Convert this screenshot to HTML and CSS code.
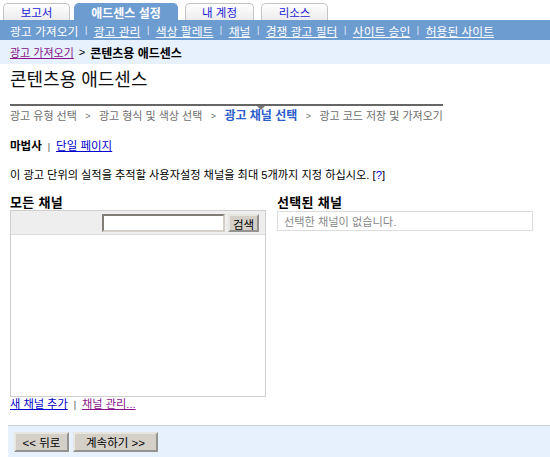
FILE: index.html
```html
<!DOCTYPE html>
<html lang="ko">
<head>
<meta charset="utf-8">
<title>콘텐츠용 애드센스</title>
<link rel="stylesheet" href="styles.css">
</head>
<body>
<div class="tabs">
  <a class="tab t1" href="#">보고서</a>
  <a class="tab t2 active" href="#">애드센스 설정</a>
  <a class="tab t3" href="#">내 계정</a>
  <a class="tab t4" href="#">리소스</a>
</div>
<div class="nav">
  <span class="cur">광고 가져오기</span><span class="sep">|</span>
  <a href="#">광고 관리</a><span class="sep">|</span>
  <a href="#">색상 팔레트</a><span class="sep">|</span>
  <a href="#">채널</a><span class="sep">|</span>
  <a href="#">경쟁 광고 필터</a><span class="sep">|</span>
  <a href="#">사이트 승인</a><span class="sep">|</span>
  <a href="#">허용된 사이트</a>
</div>
<div class="crumb">
  <a class="visited" href="#">광고 가져오기</a><span class="gt">&gt;</span><b>콘텐츠용 애드센스</b>
</div>
<div class="content">
  <h1 class="title">콘텐츠용 애드센스</h1>
  <div class="steps">
    <span class="step">광고 유형 선택</span>
    <span class="arrow">&gt;</span>
    <span class="step">광고 형식 및 색상 선택</span>
    <span class="arrow">&gt;</span>
    <span class="step on">광고 채널 선택</span>
    <span class="arrow">&gt;</span>
    <span class="step">광고 코드 저장 및 가져오기</span>
  </div>
  <div class="mode"><b>마법사</b><span class="bar">|</span><a href="#">단일 페이지</a></div>
  <p class="desc">이 광고 단위의 실적을 추적할 사용자설정 채널을 최대 5개까지 지정 하십시오. [<a class="help" href="#">?</a>]</p>
  <div class="cols">
    <div class="col">
      <div class="colhead">모든 채널</div>
      <div class="allbox">
        <div class="toolbar">
          <input class="search" type="text">
          <button class="wbtn sbtn" type="button">검색</button>
        </div>
      </div>
      <div class="links"><a href="#">새 채널 추가</a><span class="bar">|</span><a class="visited" href="#">채널 관리...</a></div>
    </div>
    <div class="col">
      <div class="colhead">선택된 채널</div>
      <div class="selbox">선택한 채널이 없습니다.</div>
    </div>
  </div>
</div>
<div class="footer">
  <button class="wbtn back" type="button">&lt;&lt; 뒤로</button>
  <button class="wbtn next" type="button">계속하기 &gt;&gt;</button>
</div>
</body>
</html>
```
FILE: styles.css
```css
* { box-sizing: border-box; }
body {
  margin: 0;
  font-family: "Liberation Sans", "Noto Sans CJK KR", sans-serif;
  font-size: 11px;
  color: #000;
  background: #fff;
}
a { color: #0000cc; }
a.visited { color: #881188; }
a.help { text-decoration: none; }

.tabs {
  display: flex;
  align-items: flex-end;
  height: 20px;
  padding: 3px 0 0 3px;
}
.tab {
  display: flex;
  align-items: center;
  justify-content: center;
  height: 17px;
  border: 1px solid #c4c4c4;
  border-bottom: none;
  border-radius: 5px 5px 0 0;
  background: linear-gradient(#ffffff, #ececec);
  color: #1a1ad8;
  text-decoration: none;
  font-size: 11.5px;
}
.t1 { width: 67px; }
.t2 { width: 104px; margin-left: 4px; }
.t3 { width: 69px; margin-left: 7px; }
.t4 { width: 67px; margin-left: 7px; }
.tab.active {
  background: #6d9cd1;
  border-color: #6d9cd1;
  color: #fff;
  font-size: 12px;
  font-weight: bold;
}

.nav {
  display: flex;
  align-items: center;
  height: 20px;
  padding-left: 10px;
  background: #6d9cd1;
  color: #fff;
  font-size: 11.8px;
}
.nav a { color: #fff; }
.nav .sep { margin: 0 6.5px; font-size: 9px; color: #e8eef8; }

.crumb {
  display: flex;
  align-items: center;
  height: 24px;
  padding-left: 10px;
  background: #e6f1fd;
  font-size: 11px;
}
.crumb .gt { margin: 0 5px 0 5px; }
.crumb b { font-size: 12px; }

.content { padding: 0 10px; }
.title {
  margin: 5px 0 0;
  font-size: 18px;
  font-weight: normal;
  line-height: 22px;
  color: #111;
}
.steps {
  display: flex;
  justify-content: space-between;
  width: 433px;
  margin-top: 13px;
  border-top: 2px solid #666;
  padding-top: 3px;
  color: #6e6e6e;
  font-size: 11px;
  line-height: 14px;
}
.steps .arrow { font-size: 9px; }
.step.on {
  position: relative;
  color: #2a5ccc;
  font-weight: bold;
  font-size: 12px;
}
.step.on::after {
  content: "";
  position: absolute;
  left: 50%;
  top: -3px;
  margin-left: -4px;
  border-top: 4px solid #777;
  border-left: 4px solid transparent;
  border-right: 4px solid transparent;
}
.mode {
  margin-top: 15px;
  line-height: 16px;
  font-size: 11.5px;
}
.mode .bar, .links .bar { margin: 0 6px; font-size: 9px; color: #444; }
.desc {
  margin: 12px 0 0;
  line-height: 16px;
  font-size: 11.2px;
}
.cols {
  display: grid;
  grid-template-columns: 256px 256px;
  gap: 11px;
  margin-top: 12px;
}
.colhead {
  font-weight: bold;
  font-size: 13px;
  letter-spacing: 0.3px;
  line-height: 15px;
}
.allbox {
  height: 187px;
  border: 1px solid #cfcfcf;
  background: #fff;
}
.toolbar {
  display: flex;
  justify-content: flex-end;
  align-items: center;
  gap: 3px;
  height: 24px;
  padding-right: 6px;
  background: #eeeeee;
  border-bottom: 1px solid #dcdcdc;
}
.search {
  width: 123px;
  height: 18px;
  margin: 0;
  border: 2px inset #d4d0c8;
  background: #fff;
  padding: 0;
}
.wbtn {
  margin: 0;
  padding: 0;
  border: 2px outset #e8e6e0;
  background: #d4d0c8;
  color: #000;
  font-family: "Liberation Sans", "Noto Sans CJK KR", sans-serif;
  font-size: 11.5px;
}
.sbtn { width: 31px; height: 18px; }
.selbox {
  height: 20px;
  margin-top: 1px;
  border: 1px solid #dcdcdc;
  padding-left: 6px;
  display: flex;
  align-items: center;
  color: #888;
  font-size: 11.2px;
}
.links {
  margin-top: 0;
  line-height: 14px;
  font-size: 11.2px;
}
.footer {
  display: flex;
  gap: 4px;
  margin: 13px 0 0 8px;
  height: 34px;
  padding: 6px 0 0 6px;
  background: #e6f1fd;
  border-top: 1px solid #c8d0dc;
  border-bottom: 1px solid #c8d0dc;
}
.back { width: 55px; height: 20px; }
.next { width: 85px; height: 20px; }
```
